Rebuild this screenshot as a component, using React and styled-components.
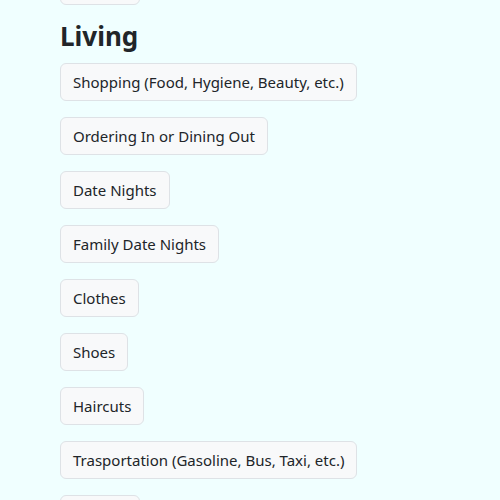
import styled, { createGlobalStyle } from 'styled-components';

const GlobalStyle = createGlobalStyle`
  body {
    margin: 0;
    background: #f0ffff;
    font-family: "Noto Sans", "Open Sans", sans-serif;
    color: #212529;
  }
`;

const Page = styled.div`
  padding: 0 60px;
  margin-top: -33px;
`;

const Heading = styled.h3`
  font-size: 26px;
  font-weight: 700;
  line-height: 1.2;
  margin: 2px 0 11px;
`;

const List = styled.div`
  display: flex;
  flex-direction: column;
  align-items: flex-start;
  gap: 16px;
  margin-bottom: 16px;
`;

const Item = styled.button`
  font-family: inherit;
  font-size: 15px;
  line-height: 24px;
  color: #212529;
  background: #f8f9fa;
  border: 1px solid #dee2e6;
  border-radius: 6px;
  padding: 6px 12px;
`;

const living = [
  'Shopping (Food, Hygiene, Beauty, etc.)',
  'Ordering In or Dining Out',
  'Date Nights',
  'Family Date Nights',
  'Clothes',
  'Shoes',
  'Haircuts',
  'Trasportation (Gasoline, Bus, Taxi, etc.)',
  'Parking',
];

export default function App() {
  return (
    <>
      <GlobalStyle />
      <Page>
        <List>
          <Item>Savings</Item>
        </List>
        <Heading>Living</Heading>
        <List>
          {living.map((name) => (
            <Item key={name}>{name}</Item>
          ))}
        </List>
      </Page>
    </>
  );
}
